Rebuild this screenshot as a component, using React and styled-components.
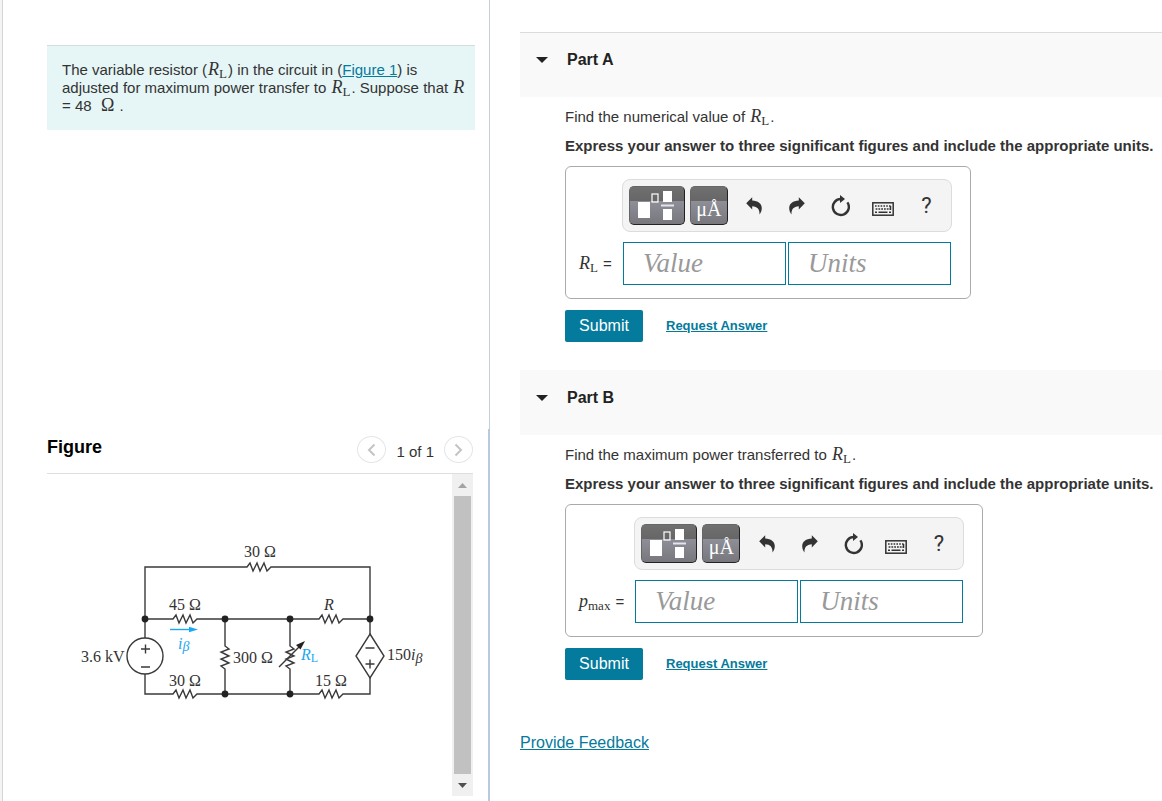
import React, { useState } from 'react'
import styled, { createGlobalStyle } from 'styled-components'

const GlobalStyle = createGlobalStyle`
  * {
    box-sizing: border-box;
  }
  body {
    margin: 0;
    background: #f4f4f4;
    color: #333;
    font-family: "Liberation Sans", Arial, sans-serif;
    font-size: 15px;
    line-height: 18px;
  }
  a {
    color: #047a9c;
  }
  p, h2 {
    margin: 0;
  }
`

const ZIGZAG = 'l3 -4 l3 8 l4 -8 l3 8 l4 -8 l3 8 l4 -4'
const ZIGZAG_DOWN = 'l4 3 l-8 3 l8 4 l-8 3 l8 4 l-8 3 l4 3'

function Rl() {
  return (
    <MathText>
      R<sub>L</sub>
    </MathText>
  )
}

function Circuit() {
  return (
    <svg width="405" height="322" viewBox="0 0 405 322" role="img" aria-label="Circuit">
      <g fill="none" stroke="#3a3a3a" strokeWidth="1.4">
        <path d={`M98 164 V93 H200 ${ZIGZAG} H323 V160`} />
        <path d={`M98 145 H126 ${ZIGZAG} H272 ${ZIGZAG} H323`} />
        <path d={`M98 200 V220 H126 ${ZIGZAG} H272 ${ZIGZAG} H323 V204`} />
        <path d={`M178 145 V172 ${ZIGZAG_DOWN} V220`} />
        <path d={`M243 145 V172 ${ZIGZAG_DOWN} V220`} />
        <circle cx="98" cy="182" r="18" />
        <path d="M323 160 L337 182 L323 204 L309 182 Z" />
        <path d="M94 175 h9 M98.5 170.5 v9 M94 193 h9" />
        <path d="M318.5 174 h9 M318.5 190 h9 M323 185.5 v9" />
        <path d="M232 193 L252 173" />
      </g>
      <path d="M258 167 L253.5 175.5 L249 171 Z" fill="#222" />
      <g fill="#222">
        <circle cx="98" cy="145" r="3.4" />
        <circle cx="178" cy="145" r="3.4" />
        <circle cx="243" cy="145" r="3.4" />
        <circle cx="323" cy="145" r="3.4" />
        <circle cx="178" cy="220" r="3.4" />
        <circle cx="243" cy="220" r="3.4" />
      </g>
      <path d="M123 155.5 H144" stroke="#1ba7f2" strokeWidth="1.4" />
      <path d="M142 152.7 L151 155.5 L142 158.3 Z" fill="#1ba7f2" />
      <Label x="197" y="83">30 Ω</Label>
      <Label x="122" y="136">45 Ω</Label>
      <Label x="122" y="212">30 Ω</Label>
      <Label x="34" y="188">3.6 kV</Label>
      <Label x="186" y="189">300 Ω</Label>
      <Label x="268" y="212">15 Ω</Label>
      <Label x="277" y="136" $italic>R</Label>
      <Label x="131" y="175" $italic $blue>
        i<tspan dy="2" fontSize="14">β</tspan>
      </Label>
      <Label x="254" y="186" $italic $blue>
        R<tspan dy="2" fontSize="12" fontStyle="normal">L</tspan>
      </Label>
      <Label x="340" y="186">
        150<tspan fontStyle="italic">i</tspan>
        <tspan dy="3" fontSize="14" fontStyle="italic">β</tspan>
      </Label>
    </svg>
  )
}

function TemplateIcon() {
  return (
    <svg width="38" height="32" viewBox="0 0 38 32">
      <rect x="0" y="12" width="12" height="16" fill="#fff" />
      <rect x="14" y="4" width="6" height="8" fill="none" stroke="#fff" strokeWidth="1.2" />
      <rect x="25" y="1" width="9" height="11" fill="#fff" />
      <rect x="23" y="14.5" width="13" height="2" fill="#e4e4ea" />
      <rect x="25" y="19" width="9" height="11" fill="#fff" />
    </svg>
  )
}

function UndoIcon({ flip }) {
  return (
    <svg width="16" height="18" viewBox="0 0 16 18" fill="#333">
      <path
        transform={flip ? 'translate(16 0) scale(-1 1)' : undefined}
        d="M.2 6.3 L6.2 .2 V3.4 C12 3.6 15.8 6.5 15.8 11 C15.8 13.5 15 15.5 13.5 17.5 C13.8 12.5 11.5 9.4 6.2 9.2 V12.6 Z"
      />
    </svg>
  )
}

function ResetIcon() {
  return (
    <svg width="20" height="22" viewBox="0 0 20 22">
      <path d="M11 4 A8 8 0 1 0 17.4 7.4" fill="none" stroke="#333" strokeWidth="2.4" />
      <path d="M10 0 L15 4 L10 8 Z" fill="#333" />
    </svg>
  )
}

function KeyboardIcon() {
  return (
    <svg width="22" height="14" viewBox="0 0 22 14" fill="none" stroke="#333">
      <rect x=".8" y=".8" width="20.4" height="12.4" strokeWidth="1.5" />
      <path d="M3 4 H19" strokeWidth="1.6" strokeDasharray="1.6 1.2" />
      <path d="M3.6 7 H19" strokeWidth="1.6" strokeDasharray="1.8 1" />
      <path d="M3 10.2 H5 M6.5 10.2 H15.5 M17 10.2 H19 M18.5 4 V8" strokeWidth="1.5" />
    </svg>
  )
}

function Part({ id, title, question, label }) {
  const [open, setOpen] = useState(true)
  return (
    <section>
      <PartHeader>
        <PartToggle aria-expanded={open} onClick={() => setOpen(!open)}>
          <svg width="12" height="6" viewBox="0 0 12 6">
            <path d="M0 0 H12 L6 6 Z" fill="#222" />
          </svg>
          {title}
        </PartToggle>
      </PartHeader>
      {open && (
        <PartBody>
          <p>{question}</p>
          <Instruction>
            Express your answer to three significant figures and include the appropriate units.
          </Instruction>
          <AnswerBox>
            <Toolbar>
              <DarkButton $wide aria-label="Templates">
                <TemplateIcon />
              </DarkButton>
              <DarkButton>μÅ</DarkButton>
              <IconButtons>
                <IconButton aria-label="Undo">
                  <UndoIcon />
                </IconButton>
                <IconButton aria-label="Redo">
                  <UndoIcon flip />
                </IconButton>
                <IconButton aria-label="Reset">
                  <ResetIcon />
                </IconButton>
                <IconButton $low aria-label="Keyboard">
                  <KeyboardIcon />
                </IconButton>
                <IconButton>?</IconButton>
              </IconButtons>
            </Toolbar>
            <AnswerLabel htmlFor={`${id}-value`}>{label} =</AnswerLabel>
            <Fields>
              <AnswerInput id={`${id}-value`} placeholder="Value" />
              <AnswerInput aria-label="Units" placeholder="Units" />
            </Fields>
          </AnswerBox>
          <Actions>
            <SubmitButton>Submit</SubmitButton>
            <RequestLink href="#request">Request Answer</RequestLink>
          </Actions>
        </PartBody>
      )}
    </section>
  )
}

export default function App() {
  return (
    <>
      <GlobalStyle />
      <Page>
        <LeftColumn>
          <ProblemPane>
            <Problem>
              The variable resistor (<Rl />) in the circuit in (<a href="#figure">Figure 1</a>) is
              adjusted for maximum power transfer to <Rl />. Suppose that <MathText>R</MathText>{' '}
              = 48 &nbsp;<MathText $upright>Ω</MathText> .
            </Problem>
          </ProblemPane>
          <FigurePane id="figure">
            <FigureHeader>
              <FigureTitle>Figure</FigureTitle>
              <Pager>
                <PagerButton aria-label="Previous">
                  <svg width="9" height="14" viewBox="0 0 9 14">
                    <path d="M7.5 1.5 L2 7 L7.5 12.5" />
                  </svg>
                </PagerButton>
                <span>1 of 1</span>
                <PagerButton aria-label="Next">
                  <svg width="9" height="14" viewBox="0 0 9 14">
                    <path d="M1.5 1.5 L7 7 L1.5 12.5" />
                  </svg>
                </PagerButton>
              </Pager>
            </FigureHeader>
            <Viewer>
              <Drawing>
                <Circuit />
              </Drawing>
              <ScrollTrack>
                <ScrollArrow aria-label="Scroll up">
                  <svg width="9" height="5" viewBox="0 0 9 5">
                    <path d="M0 5 H9 L4.5 0 Z" fill="#a3a3a3" />
                  </svg>
                </ScrollArrow>
                <ScrollThumb />
                <ScrollArrow aria-label="Scroll down">
                  <svg width="9" height="5" viewBox="0 0 9 5">
                    <path d="M0 0 H9 L4.5 5 Z" fill="#505050" />
                  </svg>
                </ScrollArrow>
              </ScrollTrack>
            </Viewer>
          </FigurePane>
        </LeftColumn>
        <RightColumn>
          <Part
            id="a"
            title="Part A"
            question={<>Find the numerical value of <Rl />.</>}
            label={<Rl />}
          />
          <Part
            id="b"
            title="Part B"
            question={<>Find the maximum power transferred to <Rl />.</>}
            label={
              <MathText>
                p<sub>max</sub>
              </MathText>
            }
          />
          <FeedbackLink href="#feedback">Provide Feedback</FeedbackLink>
        </RightColumn>
      </Page>
    </>
  )
}

const Page = styled.div`
  display: grid;
  grid-template-columns: minmax(320px, 488px) minmax(0, 1fr);
  min-height: 100vh;
  margin-left: 2px;
  background: #fff;
`
const LeftColumn = styled.div`
  display: flex;
  flex-direction: column;
  border-left: 1px solid #d5d5d5;
`
const ProblemPane = styled.div`
  flex: 1;
  padding: 45px 14px 20px 44px;
  border-right: 1px solid #c3d0dc;
`
const Problem = styled.p`
  padding: 15px 8px 15px 15px;
  background: #e6f6f6;
  border-top: 1px solid #d5dcdc;
`
const MathText = styled.span`
  padding: 0 1px;
  font-family: "Liberation Serif", "Times New Roman", serif;
  font-size: 18px;
  font-style: ${(props) => (props.$upright ? 'normal' : 'italic')};
  font-weight: normal;
  line-height: 0;
  sub {
    font-size: 13px;
    font-style: normal;
    line-height: 0;
    vertical-align: -3px;
  }
`
const FigurePane = styled.section`
  padding: 0 15px 5px 44px;
  border-right: 2px solid #b9cbdb;
`
const FigureHeader = styled.header`
  display: flex;
  justify-content: space-between;
  align-items: flex-start;
  padding: 7px 0 10px;
  border-bottom: 1px solid #dcdfdf;
`
const FigureTitle = styled.h2`
  color: #000;
  font-size: 18px;
  line-height: 22px;
`
const Pager = styled.div`
  display: flex;
  align-items: center;
  gap: 10px;
  span {
    padding-top: 4px;
  }
`
const PagerButton = styled.button`
  display: flex;
  align-items: center;
  justify-content: center;
  width: 29px;
  height: 27px;
  padding: 0;
  background: #fff;
  border: 1px solid #e3e6e8;
  border-radius: 50%;
  path {
    fill: none;
    stroke: #c4c4c4;
    stroke-width: 2;
  }
`
const Viewer = styled.div`
  display: flex;
`
const Drawing = styled.div`
  flex: 1;
  min-width: 0;
  overflow: hidden;
  svg {
    display: block;
  }
`
const Label = styled.text`
  fill: ${(props) => (props.$blue ? '#1ba7f2' : '#333')};
  font-family: "Liberation Serif", "Times New Roman", serif;
  font-size: 16px;
  font-style: ${(props) => (props.$italic ? 'italic' : 'normal')};
`
const ScrollTrack = styled.div`
  display: flex;
  flex-direction: column;
  width: 21px;
  padding: 0 2px;
  background: #f0f0f0;
`
const ScrollArrow = styled.button`
  display: flex;
  align-items: center;
  justify-content: center;
  height: 22px;
  padding: 0;
  background: none;
  border: 0;
`
const ScrollThumb = styled.div`
  flex: 1;
  background: #c1c1c1;
`
const RightColumn = styled.main`
  padding: 32px 0 0 30px;
`
const PartHeader = styled.header`
  padding: 18px 16px 28px;
  background: #f9f9f9;
  border-top: 1px solid #dcdcdc;
  section + section > & {
    border-top-color: #f9f9f9;
  }
`
const PartToggle = styled.button`
  display: flex;
  align-items: center;
  gap: 19px;
  padding: 0;
  background: none;
  border: 0;
  color: #222;
  font: bold 16px/18px "Liberation Sans", Arial, sans-serif;
`
const PartBody = styled.div`
  padding: 11px 8px 28px 45px;
`
const Instruction = styled.p`
  margin: 11px 0;
  font-weight: bold;
`
const AnswerBox = styled.div`
  display: inline-grid;
  grid-template-columns: auto auto;
  gap: 10px;
  align-items: center;
  padding: 12px 18px 13px 12px;
  border: 1px solid #aaa;
  border-radius: 6px;
  vertical-align: top;
`
const Toolbar = styled.div`
  grid-column: 2;
  display: flex;
  gap: 5px;
  padding: 6px 3px 6px 6px;
  background: #f4f4f4;
  border: 1px solid #dcdcdc;
  border-radius: 8px;
`
const DarkButton = styled.button`
  display: flex;
  align-items: center;
  justify-content: center;
  width: ${(props) => (props.$wide ? '56px' : '38px')};
  height: 39px;
  padding: ${(props) => (props.$wide ? '0' : '6px 0 0')};
  background: linear-gradient(#707070 0, #666 38%, #8e8e98 39%, #77777c 100%);
  border: 1px solid #666;
  border-right-color: #222;
  border-bottom-color: #222;
  border-radius: 5px;
  color: #fff;
  font: 20px/24px "Liberation Serif", "Times New Roman", serif;
`
const IconButtons = styled.div`
  display: flex;
`
const IconButton = styled.button`
  display: flex;
  align-items: center;
  justify-content: center;
  width: 43px;
  height: 39px;
  padding: ${(props) => (props.$low ? '6px 0 0' : '0')};
  background: none;
  border: 0;
  color: #333;
  font: 22px/24px Roboto, sans-serif;
`
const AnswerLabel = styled.label`
  text-align: right;
`
const Fields = styled.div`
  display: grid;
  grid-template-columns: 1fr 1fr;
  gap: 2px;
  padding: 0 1px;
`
const AnswerInput = styled.input`
  width: 0;
  min-width: 100%;
  height: 43px;
  padding: 0 19px;
  border: 1px solid #047a9c;
  color: #333;
  font: italic 27px "Liberation Serif", "Times New Roman", serif;
  &::placeholder {
    color: #999;
    opacity: 1;
  }
`
const Actions = styled.div`
  display: flex;
  align-items: center;
  gap: 23px;
  margin-top: 11px;
`
const SubmitButton = styled.button`
  width: 78px;
  height: 32px;
  padding: 0;
  background: #047a9c;
  border: 0;
  border-radius: 2px;
  color: #fff;
  font: 16px/18px "Liberation Sans", Arial, sans-serif;
`
const RequestLink = styled.a`
  font-size: 13px;
  font-weight: bold;
`
const FeedbackLink = styled.a`
  display: inline-block;
  margin: 26px 0;
  font-size: 16px;
`
